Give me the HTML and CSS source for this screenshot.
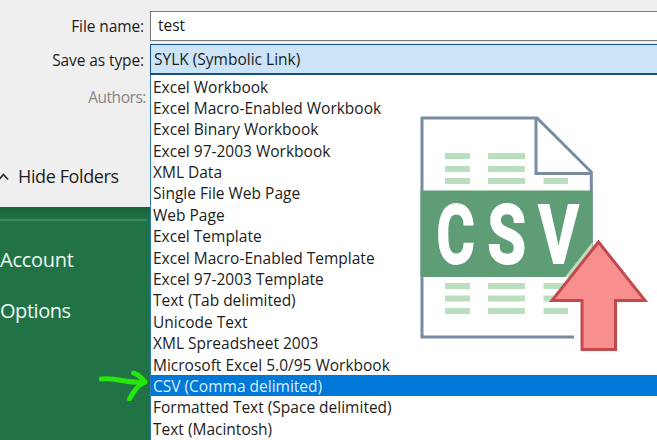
FILE: index.html
```html
<!DOCTYPE html>
<html lang="en">
<head>
<meta charset="utf-8">
<title>Save As</title>
<link rel="stylesheet" href="styles.css">
</head>
<body>
<div class="window">
  <aside class="side">
    <section class="dialog">
      <label class="label file">File name:</label>
      <label class="label type">Save as type:</label>
      <label class="label authors">Authors:</label>
      <div class="folders">
        <svg class="chevron" width="9" height="9" viewBox="0 0 9 9"><path d="M-1 7.500 3.500 2.500 8 7.500"/></svg>
        <span>Hide Folders</span>
      </div>
    </section>
    <nav class="backstage">
      <div class="rule"></div>
      <a class="account">Account</a>
      <a class="options">Options</a>
      <svg class="pointer" width="50" height="33" viewBox="99 368 50 33"><path d="M101 379C119 377 125 384 145 382M133.500 373C138 374.500 142 378 145 382C138 385 134 390 129.500 399"/></svg>
    </nav>
  </aside>
  <main class="main">
    <div class="input">test</div>
    <div class="select">SYLK (Symbolic Link)</div>
    <ul class="list">
      <li>Excel Workbook</li>
      <li>Excel Macro-Enabled Workbook</li>
      <li>Excel Binary Workbook</li>
      <li>Excel 97-2003 Workbook</li>
      <li>XML Data</li>
      <li>Single File Web Page</li>
      <li>Web Page</li>
      <li>Excel Template</li>
      <li>Excel Macro-Enabled Template</li>
      <li>Excel 97-2003 Template</li>
      <li>Text (Tab delimited)</li>
      <li>Unicode Text</li>
      <li>XML Spreadsheet 2003</li>
      <li>Microsoft Excel 5.0/95 Workbook</li>
      <li class="selected">CSV (Comma delimited)</li>
      <li>Formatted Text (Space delimited)</li>
      <li>Text (Macintosh)</li>
    </ul>
  </main>
  <svg class="csv" width="237" height="240" viewBox="415 112 237 240">
    <path class="outline" d="M574 337H422V118H537L591.300 172V250"/>
    <path class="outline" d="M536 118V173.500H591"/>
    <path class="rows" d="M445 156H470M488 156H525M445 169H470M488 169H525M445 181H470M488 181H525M543.500 181H568M445 286H470M488 286H525M543.500 286H568M445 298.500H470M488 298.500H525M543.500 298.500H568M445 311H470M488 311H525M543.500 311H568"/>
    <path class="band" d="M420.500 190.500H592.500V277H420.500Z"/>
    <path class="edge" d="M592.500 242V250L571 277H565Z"/>
    <g class="letters">
      <text transform="translate(436.500 263) scale(.72 1)">C</text>
      <text transform="translate(487.500 263) scale(.77 1)">S</text>
      <text transform="translate(538.500 263) scale(.76 1)">V</text>
    </g>
    <path class="arrow" d="M598.500 242 645 300.500H615.500V349.500H582V300.500H552Z"/>
  </svg>
</div>
</body>
</html>
```
FILE: styles.css
```css
* { box-sizing: border-box; }
body { margin: 0; font-family: "Open Sans", "Noto Sans", sans-serif; font-size: 15.5px; letter-spacing: 0; color: #1c1c1c; }
.window { position: relative; display: grid; grid-template-columns: 150px 1fr; width: 657px; height: 440px; overflow: hidden; background: #efefef; }
.side { display: flex; flex-direction: column; }
.dialog { display: flex; flex-direction: column; height: 207px; padding-top: 15px; background: #efefef; }
.label { height: 22px; padding-right: 6px; line-height: 22px; letter-spacing: -.1px; text-align: right; white-space: nowrap; }
.type { margin-top: 12px; }
.authors { margin-top: 15px; padding-right: 4px; letter-spacing: -.45px; color: #858585; }
.folders { display: flex; align-items: center; gap: 9px; height: 26px; margin-top: 55px; font-size: 18px; letter-spacing: -.38px; white-space: nowrap; }
.chevron { fill: none; stroke: #333; stroke-width: 1.8; }
.backstage { display: flex; flex-direction: column; flex: 1; background: linear-gradient(#1c5e39, #217346 12px); color: #f0f8f3; font-size: 20px; letter-spacing: -.25px; line-height: 28px; }
.rule { width: 147px; height: 2px; margin-top: 12px; background: #3d8a5e; }
.account { margin-top: 25px; }
.options { margin-top: 23px; letter-spacing: -.45px; }
.pointer { margin: 43px 0 0 99px; fill: none; stroke: #25e60d; stroke-width: 5; stroke-linecap: round; stroke-linejoin: round; }
.main { display: flex; flex-direction: column; min-width: 0; padding-top: 11px; }
.input { height: 30px; margin-right: -1px; padding-left: 7px; border: 1px solid #7a7a7a; background: #fff; line-height: 27px; }
.select { height: 31px; margin-top: 3px; margin-right: -1px; padding-left: 3px; border: 1px solid #174f82; border-bottom-width: 2px; background: #cce4f8; line-height: 29px; }
.list { flex: 1; margin: 0; padding: .5px 0 0; border-left: 1px solid #2b7bbd; background: #fff; list-style: none; }
.list li { height: 21.4px; padding-left: 2px; line-height: 22px; white-space: nowrap; }
.list .selected { background: #0078d7; color: #dcefff; }
.csv { position: absolute; left: 415px; top: 112px; }
.outline { fill: none; stroke: #788ba0; stroke-width: 3; }
.rows { fill: none; stroke: #bbdfbe; stroke-width: 6.2; }
.band { fill: #5e9d76; }
.edge { fill: #bbdfbe; }
.letters { fill: #fff; stroke: #fff; stroke-width: 2; font: 700 81px Roboto, sans-serif; letter-spacing: 0; }
.arrow { fill: #f78f8f; stroke: #c24a4c; stroke-width: 3; }
```
